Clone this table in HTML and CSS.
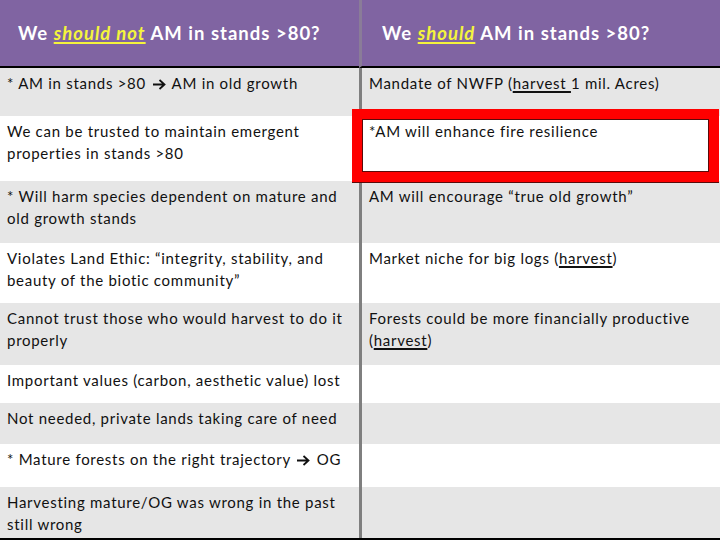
FILE: index.html
```html
<!DOCTYPE html>
<html>
<head>
<meta charset="utf-8">
<link rel="stylesheet" href="styles.css">
</head>
<body>
<div class="slide">
  <div class="table">
    <div class="cell head left">We <span class="hl">should not</span> AM in stands &gt;80?</div>
    <div class="cell head right">We <span class="hl">should</span> AM in stands &gt;80?</div>

    <div class="cell gray left">* AM in stands &gt;80 <svg class="arrow" viewBox="0 0 14 11" width="14" height="11"><path d="M1 5.5 H12 M7.5 1 L12.5 5.5 L7.5 10" fill="none" stroke="#111" stroke-width="1.8"/></svg> AM in old growth</div>
    <div class="cell gray right">Mandate of NWFP (<u>harvest </u>1 mil. Acres)</div>

    <div class="cell white left">We can be trusted to maintain emergent<br>properties in stands &gt;80</div>
    <div class="cell white right">*AM will enhance fire resilience</div>

    <div class="cell gray left">* Will harm species dependent on mature and<br>old growth stands</div>
    <div class="cell gray right">AM will encourage “true old growth”</div>

    <div class="cell white left">Violates Land Ethic: “integrity, stability, and<br>beauty of the biotic community”</div>
    <div class="cell white right">Market niche for big logs (<u>harvest</u>)</div>

    <div class="cell gray left">Cannot trust those who would harvest to do it<br>properly</div>
    <div class="cell gray right">Forests could be more financially productive<br>(<u>harvest</u>)</div>

    <div class="cell white left">Important values (carbon, aesthetic value) lost</div>
    <div class="cell white right"></div>

    <div class="cell gray left">Not needed, private lands taking care of need</div>
    <div class="cell gray right"></div>

    <div class="cell white left">* Mature forests on the right trajectory <svg class="arrow" viewBox="0 0 14 11" width="14" height="11"><path d="M1 5.5 H12 M7.5 1 L12.5 5.5 L7.5 10" fill="none" stroke="#111" stroke-width="1.8"/></svg> OG</div>
    <div class="cell white right"></div>

    <div class="cell gray left">Harvesting mature/OG was wrong in the past<br>still wrong</div>
    <div class="cell gray right"></div>
  </div>
  <div class="highlight-box"></div>
</div>
</body>
</html>
```

FILE: styles.css
```css
html, body {
  margin: 0;
  padding: 0;
  background: #ffffff;
}

.slide {
  position: relative;
  width: 720px;
  height: 540px;
  overflow: hidden;
  font-family: Lato, "Open Sans", "Liberation Sans", sans-serif;
  color: #111111;
}

.table {
  display: grid;
  grid-template-columns: 359px 361px;
  grid-template-rows: 68px 48px 65px 62px 60px 62px 38px 41px 43px 51px;
  border-bottom: 2px solid #000000;
}

.cell {
  box-sizing: border-box;
  font-size: 15px;
  line-height: 22px;
  letter-spacing: 0.72px;
  padding: 4px 0 0 7px;
  white-space: nowrap;
}

.cell.right {
  border-left: 3px solid #7f7f7f;
  padding-left: 7px;
}

.gray {
  background: #e6e6e6;
}

.white {
  background: #ffffff;
}

.head {
  background: #8064a2;
  color: #ffffff;
  font-weight: bold;
  font-size: 18.5px;
  line-height: 24px;
  letter-spacing: 1px;
  padding-top: 21px;
  border-bottom: 2px solid #000000;
}

.head.left {
  padding-left: 18px;
}

.head.right {
  padding-left: 20px;
  border-left-color: #8a7c98;
}

.hl {
  color: #f4f43c;
  font-style: italic;
  text-decoration: underline;
  text-decoration-thickness: 2px;
  text-underline-offset: 2px;
}

u {
  text-decoration-thickness: 1.5px;
  text-underline-offset: 2px;
}

.arrow {
  display: inline-block;
  vertical-align: -1px;
  margin: 0 2px 0 1px;
}

.highlight-box {
  position: absolute;
  left: 352px;
  top: 109px;
  width: 367px;
  height: 73px;
  box-sizing: border-box;
  border: 10px solid #ff0000;
  box-shadow: inset 0 0 0 1px #5a0a0a, 0 1px 0 0 #5a0a0a;
}
```
